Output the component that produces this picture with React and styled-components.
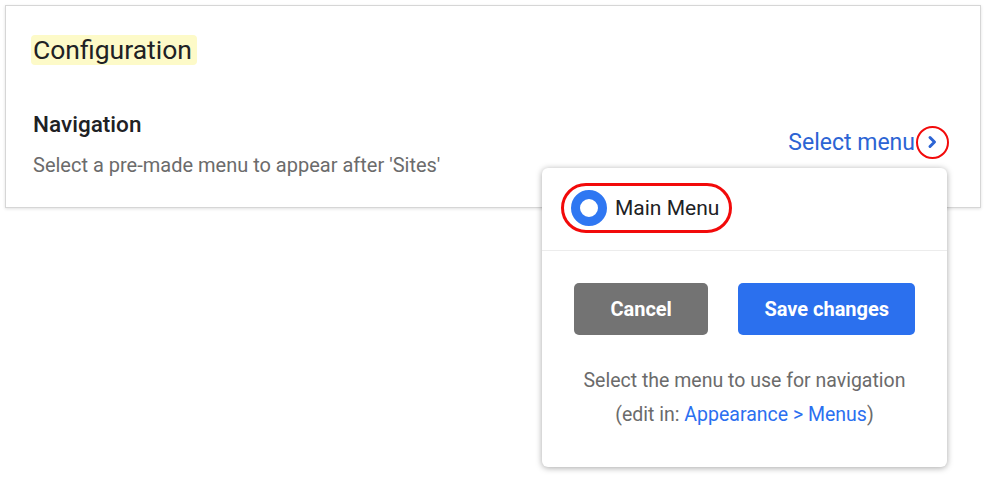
import styled, { createGlobalStyle } from "styled-components";

const GlobalStyle = createGlobalStyle`
  body {
    margin: 0;
    background: #ffffff;
    font-family: Roboto, "Liberation Sans", Arial, sans-serif;
    color: #202124;
  }
`;

export default function App() {
  return (
    <>
      <GlobalStyle />
      <Page>
        <Card>
          <Title>Configuration</Title>
          <Row>
            <Info>
              <Label>Navigation</Label>
              <Description>
                Select a pre-made menu to appear after 'Sites'
              </Description>
            </Info>
            <MenuAnchor>
              <SelectButton>
                Select menu
                <Chevron>
                  <svg width="11" height="14" viewBox="0 0 11 14">
                    <path
                      d="M3 2.5 L7.5 7 L3 11.5"
                      fill="none"
                      stroke="#2c64d4"
                      strokeWidth="3"
                      strokeLinecap="round"
                      strokeLinejoin="round"
                    />
                  </svg>
                </Chevron>
              </SelectButton>
              <Popover>
                <OptionSection>
                  <Option>
                    <Radio />
                    Main Menu
                  </Option>
                </OptionSection>
                <Footer>
                  <Buttons>
                    <Button $variant="cancel">Cancel</Button>
                    <Button $variant="save">Save changes</Button>
                  </Buttons>
                  <Hint>
                    Select the menu to use for navigation
                    <br />
                    (edit in: <HintLink>Appearance &gt; Menus</HintLink>)
                  </Hint>
                </Footer>
              </Popover>
            </MenuAnchor>
          </Row>
        </Card>
      </Page>
    </>
  );
}

const Page = styled.div`
  min-height: 477px;
  box-sizing: border-box;
  padding: 5px 6px 0 5px;
`;

const Card = styled.section`
  background: #fff;
  border: 1px solid #d6d6d6;
  box-shadow: 0 1px 3px rgba(0, 0, 0, 0.12);
  padding: 29px 31px 29px 25px;
`;

const Title = styled.h1`
  display: inline-block;
  margin: 0;
  padding: 0 5px 0 2px;
  background: #fdfac8;
  border-radius: 4px;
  font-size: 26.5px;
  font-weight: 400;
  line-height: 30px;
  color: #202124;
`;

const Row = styled.div`
  display: flex;
  align-items: center;
  justify-content: space-between;
  margin-top: 45px;
`;

const Info = styled.div`
  display: flex;
  flex-direction: column;
  gap: 14px;
  padding-left: 2px;
`;

const Label = styled.div`
  font-family: "Roboto Medium", Roboto, "Liberation Sans", Arial, sans-serif;
  font-size: 22.5px;
  font-weight: 500;
  line-height: 28px;
  color: #202124;
`;

const Description = styled.div`
  font-size: 20px;
  line-height: 26px;
  color: #6b6b6b;
`;

const MenuAnchor = styled.div`
  position: relative;
  margin-top: -4px;
`;

const SelectButton = styled.button`
  display: flex;
  align-items: center;
  gap: 1px;
  padding: 0;
  border: none;
  background: transparent;
  font-family: inherit;
  font-size: 23px;
  color: #2c64d4;
  cursor: pointer;
`;

const Chevron = styled.span`
  display: inline-flex;
  align-items: center;
  justify-content: center;
  width: 29px;
  height: 29px;
  border: 2px solid #f20a0a;
  border-radius: 50%;
`;

const Popover = styled.div`
  position: absolute;
  top: calc(100% + 9px);
  right: 2px;
  width: 405px;
  background: #fff;
  border-radius: 6px;
  box-shadow: 0 1px 6px rgba(0, 0, 0, 0.35);
`;

const OptionSection = styled.div`
  padding: 15px 19px 17px;
  border-bottom: 1px solid #ececec;
`;

const Option = styled.label`
  display: inline-flex;
  align-items: center;
  gap: 8px;
  height: 44px;
  padding: 0 10px 0 7px;
  border: 3.5px solid #f20a0a;
  border-radius: 26px;
  font-size: 21px;
  color: #202124;
`;

const Radio = styled.span`
  width: 18px;
  height: 18px;
  border: 9px solid #2f77f2;
  border-radius: 50%;
  background: #fff;
`;

const Footer = styled.div`
  display: flex;
  flex-direction: column;
  align-items: center;
  padding: 32px 20px 35px;
`;

const Buttons = styled.div`
  display: flex;
  gap: 30px;
`;

const Button = styled.button`
  height: 52px;
  padding: 0 ${(p) => (p.$variant === "cancel" ? "36.5px" : "26px")};
  border: none;
  border-radius: 5px;
  background: ${(p) => (p.$variant === "cancel" ? "#737373" : "#2b70ee")};
  color: #fff;
  font-family: inherit;
  font-size: 20px;
  font-weight: 700;
  cursor: pointer;
`;

const Hint = styled.p`
  margin: 29px 0 0;
  font-size: 19.5px;
  line-height: 34px;
  color: #6b6b6b;
  text-align: center;
`;

const HintLink = styled.a`
  color: #2b6ff0;
  text-decoration: none;
`;
